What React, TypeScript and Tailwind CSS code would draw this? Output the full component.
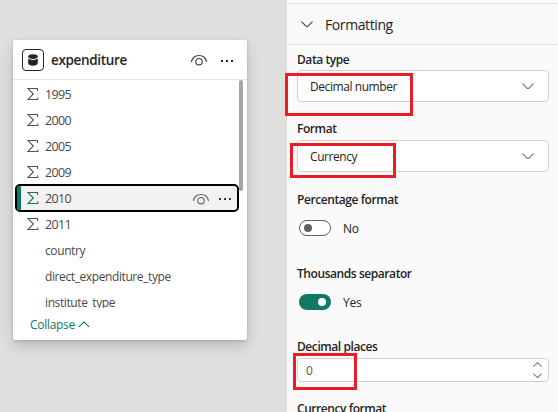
import type { ReactNode } from "react";

function Eye({ className }: { className: string }) {
  return (
    <svg width="18" height="12" viewBox="0 0 18 12" fill="none" stroke="currentColor" strokeWidth="1.1" strokeLinecap="round" className={className}>
      <path d="M1.500 7.500C2.500 3.500 5.500 1.500 9 1.500s6.500 2 7.500 6" />
      <circle cx="9" cy="7.700" r="3.200" />
    </svg>
  );
}

function Dots({ className }: { className: string }) {
  return (
    <svg width="14" height="4" viewBox="0 0 14 4" fill="currentColor" className={className}>
      <rect x="1" y="1" width="2" height="2" />
      <rect x="6" y="1" width="2" height="2" />
      <rect x="11" y="1" width="2" height="2" />
    </svg>
  );
}

function Sigma({ className }: { className: string }) {
  return (
    <svg width="12" height="14" viewBox="0 0 12 14" fill="none" stroke="currentColor" strokeWidth="1.100" className={className}>
      <path d="M10.500 4V1.500H.9L6.300 7 .9 12.500h9.900V10.500" />
    </svg>
  );
}

function Chevron({ className, up = false, w = 12 }: { className: string; up?: boolean; w?: number }) {
  return (
    <svg width={w} height={w * 0.583} viewBox="0 0 12 7" fill="none" stroke="currentColor" strokeWidth={w < 10 ? 1.4 : 1.1} className={className}>
      <path d={up ? "M.5 6.300 6 .8l5.500 5.500" : "M.5 .7 6 6.200 11.500.7"} />
    </svg>
  );
}

const numericFields = ["1995", "2000", "2005", "2009", "2010", "2011"];
const textFields = ["country", "direct_expenditure_type", "institute_type"];

function NumericRow({ name, active }: { name: string; active: boolean }) {
  return (
    <div className={active ? "relative flex h-[26px] shrink-0 items-center pl-[14px]" : "flex h-[26px] shrink-0 items-center pl-[14px]"}>
      {active && (
        <div className="absolute -top-px left-[2px] h-7 w-[224px] rounded-[5px] border-2 border-black bg-[#f3f2f1]">
          <div className="h-full w-1 bg-[#117865]" />
        </div>
      )}
      <Sigma className={active ? "relative text-[#117865]" : "text-[#555351]"} />
      <span className="relative ml-[6px] pt-[2px] text-[12.500px] tracking-[-0.65px]">{name}</span>
      {active && (
        <>
          <Eye className="relative mt-[2px] ml-auto text-[#605e5c]" />
          <Dots className="relative mt-[2px] mr-[15px] ml-[8px] text-[#3b3a39]" />
        </>
      )}
    </div>
  );
}

function TableCard() {
  return (
    <section className="mt-10 ml-[13px] flex h-[300px] w-[234px] flex-col rounded-[2px] bg-white shadow-[0_6px_14px_rgba(0,0,0,0.16),0_1px_3px_rgba(0,0,0,0.16)]">
      <header className="flex h-10 shrink-0 items-center border-b border-[#e5e5e5] pl-[9px]">
        <div className="flex h-[22px] w-[22px] items-center justify-center rounded-[4px] border-[1.500px] border-[#252423]">
          <svg width="10" height="12" viewBox="0 0 10 12" fill="#252423">
            <path d="M.2 2.500C.2 1 2.300.2 5 .2s4.800.8 4.800 2.300S7.700 4.900 5 4.900.2 4 .2 2.500Z" />
            <path d="M.2 4.600C1.300 5.500 3 6 5 6s3.700-.5 4.800-1.400v4.700c0 1.500-2.100 2.500-4.800 2.500S.2 10.800.2 9.300Z" />
          </svg>
        </div>
        <h2 className="ml-[7px] pt-[2px] text-[13.500px] font-semibold tracking-[-0.35px] text-[#252423]">expenditure</h2>
        <Eye className="ml-auto text-[#3b3a39]" />
        <Dots className="mt-[2px] mr-[13px] ml-[12px] text-[#252423]" />
      </header>
      <div className="relative flex h-[228px] shrink-0 flex-col overflow-hidden pt-px text-[12px] text-[#4a4846]">
        <div className="absolute top-0 right-1 h-[111px] w-1 rounded-full bg-[#a6a6a6]" />
        {numericFields.map((name) => (
          <NumericRow key={name} name={name} active={name === "2010"} />
        ))}
        {textFields.map((name) => (
          <div key={name} className="flex h-[26px] shrink-0 items-center pt-px pl-8">
            <span className="tracking-[-0.4px]">{name}</span>
          </div>
        ))}
      </div>
      <button className="flex flex-1 items-center pl-[17px] text-[12px] tracking-[-0.3px] text-[#117865]">
        <span className="pt-[2px]">Collapse</span>
        <Chevron up className="ml-[3px]" />
      </button>
    </section>
  );
}

function Label({ children, className }: { children: ReactNode; className: string }) {
  return (
    <div className={`flex items-center text-[12px] font-semibold tracking-[-0.43px] whitespace-nowrap ${className}`}>
      <span className="pt-px">{children}</span>
    </div>
  );
}

function Select({ value, mark }: { value: string; mark: string }) {
  return (
    <div className="relative flex h-8 w-[252px] items-center rounded-[4px] border border-[#d1d1d1] bg-white pr-[14px] pl-3">
      <span className="pt-[2px] text-[12px] tracking-[-0.43px]">{value}</span>
      <Chevron className="ml-auto text-[#707070]" />
      <div className={`absolute border-3 border-[#ed1c24] ${mark}`} />
    </div>
  );
}

function Toggle({ on }: { on: boolean }) {
  return (
    <div className="flex h-4 items-center pl-[2px] text-[12px] tracking-[-0.2px]">
      {on ? (
        <div className="flex h-4 w-8 items-center justify-end rounded-full bg-[#117865] pr-[5px]">
          <div className="h-2 w-2 rounded-full bg-white" />
        </div>
      ) : (
        <div className="flex h-4 w-8 items-center rounded-full border border-[#616161] bg-white pl-1">
          <div className="h-2 w-2 rounded-full bg-[#616161]" />
        </div>
      )}
      <span className="ml-3 pt-[2px]">{on ? "Yes" : "No"}</span>
    </div>
  );
}

export default function App() {
  return (
    <main className="flex h-[412px] w-[558px] overflow-hidden bg-[#e1dfdd] font-['Open_Sans','Noto_Sans',sans-serif]">
      <div className="w-[287px] shrink-0">
        <TableCard />
      </div>
      <aside className="flex flex-1 flex-col bg-[#fafafa] text-[#242424]">
        <div className="mt-[3px] flex h-[42px] shrink-0 items-center border-y border-[#e0e0e0] pl-[14px]">
          <Chevron className="text-[#424242]" />
          <span className="ml-[12px] text-[14px] tracking-[-0.4px]">Formatting</span>
        </div>
        <div className="flex flex-col pl-[10px]">
          <Label className="h-[25px] pt-[3px]">Data type</Label>
          <Select value="Decimal number" mark="top-[2px] -left-[13px] h-[43px] w-[128px]" />
          <Label className="mt-[14px] h-6">Format</Label>
          <Select value="Currency" mark="top-[2px] -left-[8px] h-[35px] w-[106px]" />
          <Label className="mt-[15px] h-6">Percentage format</Label>
          <div className="mt-[9px]">
            <Toggle on={false} />
          </div>
          <Label className="mt-[25px] h-6">Thousands separator</Label>
          <div className="mt-[9px]">
            <Toggle on />
          </div>
          <Label className="mt-[25px] h-[23px]">Decimal places</Label>
          <div className="relative flex h-6 w-[252px] items-center rounded-[4px] border border-[#d1d1d1] bg-white pr-[6px] pl-2">
            <span className="pt-[2px] text-[12px] text-[#555]">0</span>
            <div className="ml-auto flex flex-col gap-[5px] text-[#777]">
              <Chevron up w={9} className="" />
              <Chevron w={9} className="" />
            </div>
            <div className="absolute -top-[6px] -left-[5px] h-[37px] w-[64px] border-3 border-[#ed1c24]" />
          </div>
          <Label className="mt-[14px] h-6">Currency format</Label>
        </div>
      </aside>
    </main>
  );
}
